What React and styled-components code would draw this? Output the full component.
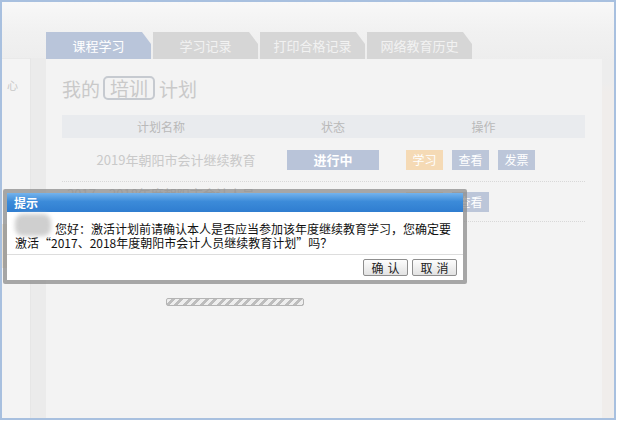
import styled, { createGlobalStyle } from "styled-components";

const Global = createGlobalStyle`
    body {
        margin: 0;
        font-family: "Noto Sans CJK SC", "Noto Sans", sans-serif;
    }
`;

const tabs = ["课程学习", "学习记录", "打印合格记录", "网络教育历史"];

function App() {
    return (
        <>
            <Global />
            <Frame>
                <Sidebar>
                    <SideBox>
                        <SideLabel>心</SideLabel>
                        <SideItem />
                    </SideBox>
                </Sidebar>
                <Main>
                    <TabRow>
                        {tabs.map((t, i) => (
                            <Tab key={t} active={i === 0}>{t}</Tab>
                        ))}
                    </TabRow>
                    <Panel>
                        <Heading>我的<Boxed>培训</Boxed>计划</Heading>
                        <HeadRow>
                            <span>计划名称</span>
                            <span>状态</span>
                            <span>操作</span>
                        </HeadRow>
                        <Row height={43}>
                            <NameCell>2019年朝阳市会计继续教育</NameCell>
                            <StatusCell><Status>进行中</Status></StatusCell>
                            <Ops>
                                <OpButton tone="orange">学习</OpButton>
                                <OpButton>查看</OpButton>
                                <OpButton>发票</OpButton>
                            </Ops>
                        </Row>
                        <Row height={39}>
                            <NameCell narrow>2017、2018年度朝阳市会计人员继续教育</NameCell>
                            <StatusCell />
                            <Ops>
                                <OpButton tone="orange">激活</OpButton>
                                <OpButton>查看</OpButton>
                            </Ops>
                        </Row>
                        <Loader />
                    </Panel>
                </Main>
                <Gutter />

                <Dialog>
                    <DialogTitle>提示</DialogTitle>
                    <DialogBody>
                        <Message>
                            <Smudge />
                            您好：激活计划前请确认本人是否应当参加该年度继续教育学习，您确定要<br />
                            激活“2017、2018年度朝阳市会计人员继续教育计划”吗？
                        </Message>
                        <DialogFooter>
                            <DialogButton>确认</DialogButton>
                            <DialogButton>取消</DialogButton>
                        </DialogFooter>
                    </DialogBody>
                </Dialog>
            </Frame>
        </>
    );
}

export default App;

const Frame = styled.div`
    position: relative;
    width: 616px;
    height: 420px;
    box-sizing: border-box;
    border: 2px solid #a8c0df;
    display: flex;
    overflow: hidden;
    background: linear-gradient(to bottom, #f8f8f8 0, #f1f1f1 30px, #ededed 60px);
`;

const Sidebar = styled.div`
    width: 44px;
    flex-shrink: 0;
    padding-top: 56px;
    box-sizing: border-box;
    background: linear-gradient(to bottom, transparent 0, transparent 56px, #ebebeb 56px);
`;

const SideBox = styled.div`
    width: 29px;
    height: 100%;
    padding-top: 20px;
    box-sizing: border-box;
    background: #f4f4f4;
    border-top: 1px solid #e9e9e9;
    border-right: 1px solid #e6e6e6;
`;

const SideLabel = styled.div`
    padding-left: 5px;
    font-size: 11px;
    line-height: 12px;
    color: #c8c8c8;
`;

const SideItem = styled.div`
    margin-top: 133px;
    width: 10px;
    height: 44px;
    background: #ebe2d4;
`;

const Main = styled.div`
    flex: 1;
    display: flex;
    flex-direction: column;
    padding-top: 30px;
`;

const TabRow = styled.div`
    display: flex;
    gap: 2px;
    height: 27px;
`;

const Tab = styled.div`
    width: 105px;
    height: 27px;
    line-height: 27px;
    text-align: center;
    font-size: 13px;
    color: ${(p) => (p.active ? "#ffffff" : "#f2f2f2")};
    background: ${(p) => (p.active ? "#b9c5da" : "#d6d6d6")};
    clip-path: polygon(0 0, calc(100% - 9px) 0, 100% 12px, 100% 100%, 0 100%);
`;

const Panel = styled.div`
    flex: 1;
    background: #f3f3f3;
    padding: 17px 17px 0 16px;
    display: flex;
    flex-direction: column;
`;

const Heading = styled.div`
    display: flex;
    align-items: center;
    height: 24px;
    font-size: 19px;
    color: #c9c9c9;
`;

const Boxed = styled.span`
    border: 2px solid #c6cad0;
    border-radius: 5px;
    padding: 0 5px;
    margin: 0 4px 0 3px;
    line-height: 20px;
`;

const HeadRow = styled.div`
    margin-top: 15px;
    height: 23px;
    line-height: 23px;
    display: grid;
    grid-template-columns: 198px 146px 1fr;
    background: #e9ebee;
    font-size: 12px;
    color: #b9b9b9;
    text-align: center;
    span:last-child {
        padding-right: 24px;
    }
`;

const Row = styled.div`
    height: ${(p) => p.height}px;
    display: grid;
    grid-template-columns: 198px 146px 1fr;
    align-items: center;
    border-bottom: 1px dotted #d8d8d8;
`;

const NameCell = styled.div`
    padding-left: ${(p) => (p.narrow ? "0" : "30px")};
    text-align: center;
    font-size: 13px;
    line-height: 16px;
    color: #c9c9c9;
    white-space: ${(p) => (p.narrow ? "normal" : "nowrap")};
`;

const StatusCell = styled.div`
    display: flex;
    justify-content: center;
`;

const Status = styled.div`
    width: 92px;
    height: 20px;
    line-height: 20px;
    text-align: center;
    font-size: 13px;
    font-weight: bold;
    color: #ffffff;
    background: #b9c4d9;
`;

const Ops = styled.div`
    display: flex;
    gap: 9px;
`;

const OpButton = styled.div`
    width: 37px;
    height: 20px;
    line-height: 20px;
    text-align: center;
    font-size: 12px;
    color: #ffffff;
    background: ${(p) => (p.tone === "orange" ? "#f5dab5" : "#bcc6d9")};
`;

const Loader = styled.div`
    margin: 76px 0 0 104px;
    width: 136px;
    height: 6px;
    border: 1px solid #b4b4b4;
    border-radius: 2px;
    background: repeating-linear-gradient(135deg, #eeeeee 0 3px, #bdbdbd 3px 6px);
`;

const Gutter = styled.div`
    width: 12px;
    flex-shrink: 0;
    background: linear-gradient(to bottom, transparent 0, transparent 80px, #f0edeb 90px);
`;

const Dialog = styled.div`
    position: absolute;
    left: 1px;
    top: 187px;
    width: 464px;
    box-sizing: border-box;
    padding: 4px;
    background: rgba(140, 140, 140, 0.75);
    border-radius: 2px;
`;

const DialogTitle = styled.div`
    height: 19px;
    line-height: 19px;
    padding-left: 7px;
    font-size: 12px;
    font-weight: bold;
    color: #ffffff;
    background: linear-gradient(to bottom, #74b3ec 0, #3c8bd9 45%, #2f7dd0 100%);
`;

const DialogBody = styled.div`
    background: #ffffff;
    height: 68px;
    box-sizing: border-box;
`;

const Message = styled.div`
    position: relative;
    padding: 10px 8px 4px 8px;
    text-indent: 40px;
    font-size: 12px;
    line-height: 14px;
    color: #111111;
    border-bottom: 1px solid #dddddd;
`;

const Smudge = styled.span`
    position: absolute;
    left: 8px;
    top: 2px;
    width: 36px;
    height: 22px;
    border-radius: 8px;
    background: #cfcfcf;
    filter: blur(2px);
`;

const DialogFooter = styled.div`
    display: flex;
    justify-content: flex-end;
    gap: 4px;
    padding: 4px 6px 0 0;
`;

const DialogButton = styled.div`
    width: 45px;
    height: 17px;
    box-sizing: border-box;
    line-height: 15px;
    text-align: center;
    font-size: 12px;
    letter-spacing: 4px;
    text-indent: 4px;
    color: #222222;
    border: 1px solid #8e8e8e;
    border-radius: 2px;
    background: linear-gradient(to bottom, #fdfdfd, #e2e2e2);
`;
